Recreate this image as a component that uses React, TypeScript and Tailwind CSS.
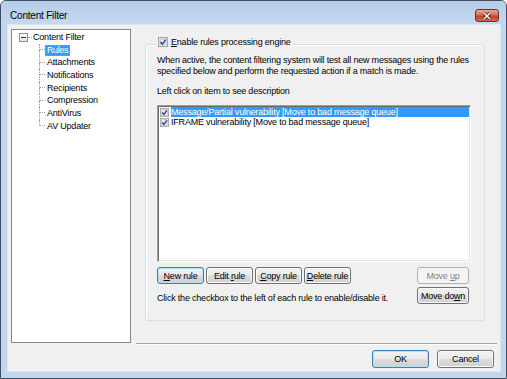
import clsx from "clsx";

const btnFace =
    "bg-[linear-gradient(#f2f2f2_0%,#ebebeb_50%,#dddddd_50%,#cfcfcf_100%)]";

function Button({
    children,
    className = "",
    isDefault = false,
    disabled = false,
}: {
    children: React.ReactNode;
    className?: string;
    isDefault?: boolean;
    disabled?: boolean;
}) {
    return (
        <button
            type="button"
            className={clsx(
                "flex items-center justify-center rounded-[3px] border leading-[10px] whitespace-nowrap",
                disabled
                    ? "border-[#adb2b5] bg-[#f4f4f4] text-[#838383]"
                    : isDefault
                      ? `border-[#3c7fb1] ${btnFace} shadow-[inset_0_0_0_1px_#b4e0f7]`
                      : `border-[#707070] ${btnFace} shadow-[inset_0_0_0_1px_#fbfbfb]`,
                className
            )}
        >
            <span>{children}</span>
        </button>
    );
}

function CheckBox({ size = 10 }: { size?: number }) {
    return (
        <svg width={size} height={size} viewBox="0 0 13 13" className="shrink-0">
            <rect x="0.5" y="0.5" width="12" height="12" fill="#f6f6f6" stroke="#8e8f8f" />
            <rect x="2.5" y="2.5" width="8" height="8" fill="#e6e8eb" stroke="#b4b9bf" />
            <path d="M3.2 6.6 L5.6 9.2 L10 3.4" stroke="#21409a" strokeWidth="1.9" fill="none" />
        </svg>
    );
}

const children = ["Rules", "Attachments", "Notifications", "Recipients", "Compression", "AntiVirus", "AV Updater"];

function Tree() {
    return (
        <div className="mt-[4px] ml-[3px] w-[120px] h-[314px] shrink-0 bg-white border border-[#828790] pt-[1px]">
            <div className="flex items-center h-[12.7px] pl-[7px]">
                <div className="w-[9px] h-[9px] border border-[#919191] bg-[linear-gradient(#ffffff,#e3e3e3)] flex items-center justify-center">
                    <div className="w-[5px] h-[1px] bg-[#1e395b]" />
                </div>
                <div className="w-[4px] border-t border-dotted border-[#a0a0a0]" />
                <span className="pl-[1px] leading-[11px]">Content Filter</span>
            </div>
            <div className="flex flex-col ml-[27px]">
                {children.map((t, i) => (
                    <div key={t} className="flex items-center h-[12.7px]">
                        <div className="self-stretch w-[6px] flex flex-col">
                            <div className="h-1/2 border-l border-b border-dotted border-[#a0a0a0]" />
                            <div
                                className={clsx(
                                    "flex-1 border-l border-dotted",
                                    i === children.length - 1 ? "border-transparent" : "border-[#a0a0a0]"
                                )}
                            />
                        </div>
                        {i === 0 ? (
                            <span className="px-[1px] leading-[9px] tracking-[-0.4px] bg-[#3399ff] text-white border border-dotted border-[#d0904a]">
                                {t}
                            </span>
                        ) : (
                            <span className="ml-[2px] leading-[11px]">{t}</span>
                        )}
                    </div>
                ))}
            </div>
        </div>
    );
}

export default function App() {
    return (
        <div className="w-[507px] h-[379px] flex flex-col bg-[#c2d6ee] border border-[#3f4d5e] rounded-t-[6px] overflow-hidden font-['Liberation_Sans',Arial,sans-serif] text-[9px] tracking-[-0.2px] text-black">
            {/* title bar */}
            <div className="h-[23px] shrink-0 flex items-start justify-between pt-[8px] pl-[9px] pr-[7px] bg-[linear-gradient(#b7cee9,#c4d8ef)]">
                <span className="text-[10px] leading-[13px]">Content Filter</span>
                <div className="w-[24px] h-[13px] rounded-[3px] border border-[#7b2c22] bg-[linear-gradient(#e9a99b_0%,#d2705e_45%,#c4412f_55%,#cf6a55_100%)] flex items-center justify-center">
                    <svg width="10" height="8" viewBox="0 0 10 8">
                        <path d="M2 1 L8 7 M8 1 L2 7" stroke="#5a1c14" strokeWidth="3.2" />
                        <path d="M2 1 L8 7 M8 1 L2 7" stroke="#ffffff" strokeWidth="1.6" />
                    </svg>
                </div>
            </div>

            {/* client area */}
            <div className="ml-[6px] mr-[5px] mb-[6px] h-[348px] bg-[#f0f0f0] border border-[#dce7f4] flex flex-col">
                <div className="flex h-[320px]">
                    <Tree />
                    <div className="ml-[5px] w-[361px] flex flex-col">
                        <div className="mt-[19px] ml-[9px] w-[340px] h-[277px] relative border border-[#d5dfe5] rounded-[3px] shadow-[inset_1px_1px_0_#ffffff] pt-[10px] pl-[11px]">
                            <div className="absolute left-[10px] top-[-8px] flex items-center gap-[3px] px-[2px] h-[10px] bg-[#f0f0f0]">
                                <CheckBox />
                                <span className="leading-[10px] whitespace-nowrap">
                                    <span className="underline">E</span>nable rules processing engine
                                </span>
                            </div>

                            <p className="leading-[11px] whitespace-nowrap">
                                When active, the content filtering system will test all new messages using the rules
                                <br />
                                specified below and perform the requested action if a match is made.
                            </p>
                            <p className="mt-[9px] leading-[11px]">Left click on item to see description</p>

                            <div className="mt-[8px] w-[314px] h-[157px] bg-white border border-t-[#a0a0a0] border-l-[#a0a0a0] border-b-white border-r-white shadow-[inset_1px_1px_0_#696969,inset_-1px_-1px_0_#e3e3e3] p-[1px]">
                                <div className="flex items-center h-[10px] pl-[1px]">
                                    <CheckBox size={9} />
                                    <div className="ml-[2px] flex-1 h-full bg-[#3399ff] text-white leading-[10px] whitespace-nowrap">
                                        Message/Partial vulnerability [Move to bad message queue]
                                    </div>
                                </div>
                                <div className="flex items-center h-[10px] pl-[1px]">
                                    <CheckBox size={9} />
                                    <div className="ml-[2px] flex-1 h-full leading-[10px] whitespace-nowrap">
                                        IFRAME vulnerability [Move to bad message queue]
                                    </div>
                                </div>
                            </div>

                            <div className="mt-[5px] w-[314px] pr-[2px] flex items-center">
                                <div className="flex gap-[2px]">
                                    <Button isDefault className="w-[47px] h-[17px]">
                                        <span className="underline">N</span>ew rule
                                    </Button>
                                    <Button className="w-[47px] h-[17px]">
                                        Edit <span className="underline">r</span>ule
                                    </Button>
                                    <Button className="w-[47px] h-[17px]">
                                        <span className="underline">C</span>opy rule
                                    </Button>
                                    <Button className="w-[47px] h-[17px]">
                                        <span className="underline">D</span>elete rule
                                    </Button>
                                </div>
                                <Button disabled className="ml-auto w-[52px] h-[17px]">
                                    Move <span className="underline">u</span>p
                                </Button>
                            </div>
                            <div className="mt-[3px] w-[314px] pr-[2px] flex items-end justify-between">
                                <span className="leading-[11px] whitespace-nowrap">
                                    Click the checkbox to the left of each rule to enable/disable it.
                                </span>
                                <Button className="w-[52px] h-[17px]">
                                    Move do<span className="underline">w</span>n
                                </Button>
                            </div>
                        </div>
                        <div className="flex-1" />
                        <div className="h-[2px] border-t border-[#a0a0a0] border-b border-b-white" />
                    </div>
                </div>

                <div className="mt-[5px] flex justify-end gap-[8px] pr-[6px]">
                    <Button isDefault className="w-[57px] h-[18px]">
                        OK
                    </Button>
                    <Button className="w-[57px] h-[18px]">Cancel</Button>
                </div>
            </div>
        </div>
    );
}
